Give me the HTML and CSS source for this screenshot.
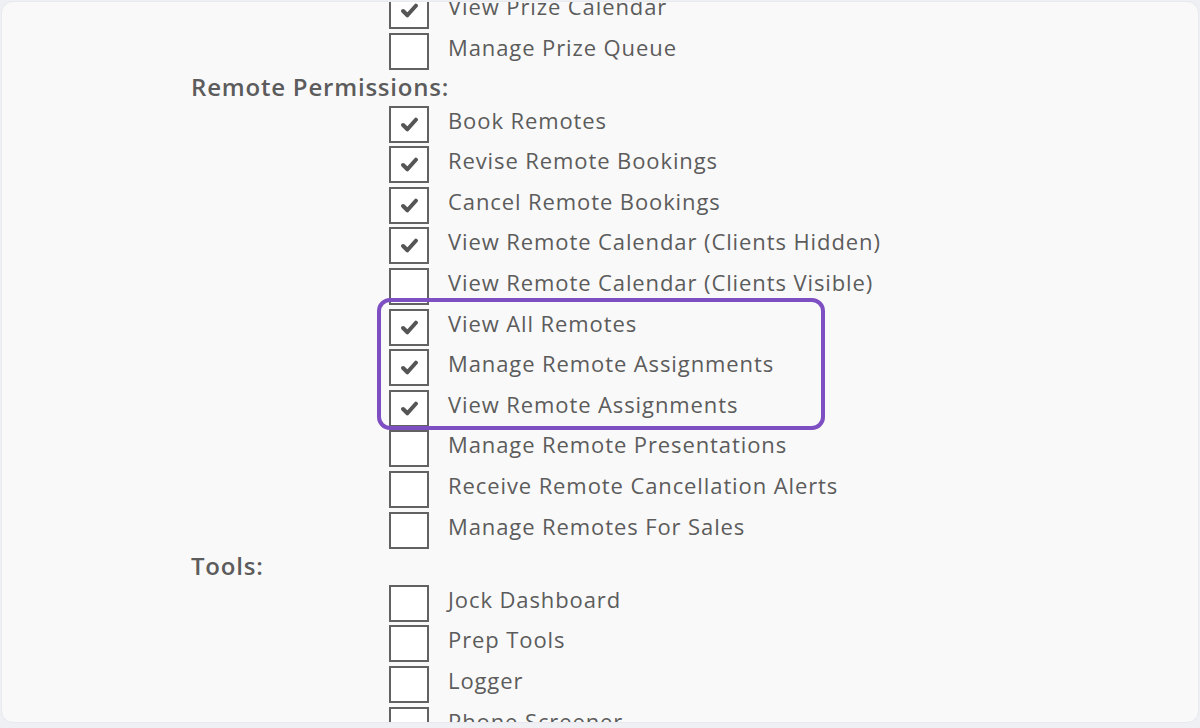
FILE: index.html
```html
<!DOCTYPE html>
<html>
<head>
<meta charset="utf-8">
<link rel="stylesheet" href="styles.css">
</head>
<body>
<div class="card">
  <div class="perm-list">
    <div class="row"><span class="box checked"><svg viewBox="0 0 16 14"><polyline points="2,7.5 6,11.5 14,2.5"/></svg></span><span class="label">View Prize Calendar</span></div>
    <div class="row"><span class="box"></span><span class="label">Manage Prize Queue</span></div>
    <div class="heading">Remote Permissions:</div>
    <div class="row"><span class="box checked"><svg viewBox="0 0 16 14"><polyline points="2,7.5 6,11.5 14,2.5"/></svg></span><span class="label">Book Remotes</span></div>
    <div class="row"><span class="box checked"><svg viewBox="0 0 16 14"><polyline points="2,7.5 6,11.5 14,2.5"/></svg></span><span class="label">Revise Remote Bookings</span></div>
    <div class="row"><span class="box checked"><svg viewBox="0 0 16 14"><polyline points="2,7.5 6,11.5 14,2.5"/></svg></span><span class="label">Cancel Remote Bookings</span></div>
    <div class="row"><span class="box checked"><svg viewBox="0 0 16 14"><polyline points="2,7.5 6,11.5 14,2.5"/></svg></span><span class="label">View Remote Calendar (Clients Hidden)</span></div>
    <div class="row"><span class="box"></span><span class="label">View Remote Calendar (Clients Visible)</span></div>
    <div class="group">
      <div class="row"><span class="box checked"><svg viewBox="0 0 16 14"><polyline points="2,7.5 6,11.5 14,2.5"/></svg></span><span class="label">View All Remotes</span></div>
      <div class="row"><span class="box checked"><svg viewBox="0 0 16 14"><polyline points="2,7.5 6,11.5 14,2.5"/></svg></span><span class="label">Manage Remote Assignments</span></div>
      <div class="row"><span class="box checked"><svg viewBox="0 0 16 14"><polyline points="2,7.5 6,11.5 14,2.5"/></svg></span><span class="label">View Remote Assignments</span></div>
      <div class="highlight"></div>
    </div>
    <div class="row"><span class="box"></span><span class="label">Manage Remote Presentations</span></div>
    <div class="row"><span class="box"></span><span class="label">Receive Remote Cancellation Alerts</span></div>
    <div class="row"><span class="box"></span><span class="label">Manage Remotes For Sales</span></div>
    <div class="heading">Tools:</div>
    <div class="row"><span class="box"></span><span class="label">Jock Dashboard</span></div>
    <div class="row"><span class="box"></span><span class="label">Prep Tools</span></div>
    <div class="row"><span class="box"></span><span class="label">Logger</span></div>
    <div class="row"><span class="box"></span><span class="label">Phone Screener</span></div>
    <div class="row"><span class="box"></span><span class="label">Call Log</span></div>
  </div>
</div>
</body>
</html>
```

FILE: styles.css
```css
html, body {
  margin: 0;
  padding: 0;
  background: #eef0f4;
}
body {
  font-family: "Open Sans", "Liberation Sans", sans-serif;
  color: #5c5c5c;
}
.card {
  margin: 1px 1px 0 1px;
  height: 722px;
  background: #f9f9f9;
  border: 1px solid #e8e9ee;
  border-radius: 12px;
  overflow: hidden;
  box-sizing: border-box;
}
.perm-list {
  margin-top: -11.8px;
  padding-left: 189px;
  display: flex;
  flex-direction: column;
}
.row {
  height: 40.6px;
  display: flex;
  align-items: center;
  padding-left: 198px;
}
.box {
  width: 40px;
  height: 37px;
  box-sizing: border-box;
  border: 2.5px solid #626262;
  background: #ffffff;
  display: flex;
  align-items: center;
  justify-content: center;
  flex: none;
}
.box svg {
  width: 17px;
  height: 15px;
}
.box polyline {
  fill: none;
  stroke: #555555;
  stroke-width: 3.8;
  stroke-linecap: round;
  stroke-linejoin: round;
}
.label {
  margin-left: 19px;
  font-size: 22px;
  letter-spacing: 0.9px;
  padding-bottom: 9px;
  white-space: nowrap;
}
.heading {
  height: 32.5px;
  display: flex;
  align-items: center;
  font-size: 24px;
  font-weight: 600;
  letter-spacing: 0.8px;
  padding-bottom: 2px;
  box-sizing: border-box;
}
.group {
  position: relative;
}
.highlight {
  position: absolute;
  left: 186px;
  top: -9px;
  width: 448px;
  height: 132px;
  box-sizing: border-box;
  border: 4.5px solid #7e4fc3;
  border-radius: 13px;
  pointer-events: none;
}
```
